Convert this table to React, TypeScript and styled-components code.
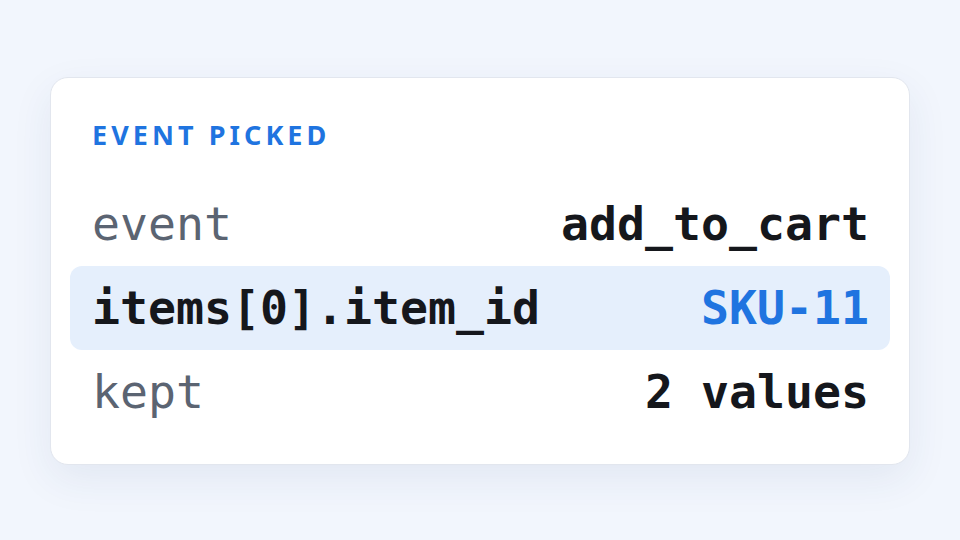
import React from "react";
import styled, { createGlobalStyle } from "styled-components";

const Global = createGlobalStyle`
  html, body { margin: 0; padding: 0; }
  body { background: #f2f6fd; width: 960px; height: 540px; overflow: hidden; }
`;

const Page = styled.div`
  width: 960px;
  height: 540px;
  display: flex;
  align-items: flex-start;
  justify-content: center;
  box-sizing: border-box;
  padding-top: 77px;
`;

const Card = styled.div`
  width: 860px;
  box-sizing: border-box;
  background: #ffffff;
  border: 1px solid #e2e6ee;
  border-radius: 18px;
  box-shadow: 0 14px 40px rgba(40, 60, 110, 0.08);
  padding: 39px 19px 30px;
  display: flex;
  flex-direction: column;
`;

const Heading = styled.div`
  font-family: "Noto Sans", "Open Sans", sans-serif;
  font-weight: 700;
  font-size: 27px;
  line-height: 36px;
  letter-spacing: 0.15em;
  color: #1f74e0;
  margin: 0 22px 29px;
`;

const Row = styled.div<{ $active?: boolean }>`
  height: 84px;
  display: flex;
  align-items: center;
  justify-content: space-between;
  padding: 0 21px 0 22px;
  border-radius: 12px;
  background: ${(p) => (p.$active ? "#e5effc" : "transparent")};
  font-family: "DejaVu Sans Mono", monospace;
  font-size: 46.5px;
  white-space: nowrap;
`;

const Key = styled.span<{ $strong?: boolean }>`
  font-weight: ${(p) => (p.$strong ? 700 : 400)};
  color: ${(p) => (p.$strong ? "#15171c" : "#5b6472")};
`;

const Value = styled.span<{ $accent?: boolean }>`
  font-weight: 700;
  color: ${(p) => (p.$accent ? "#1f74e0" : "#15171c")};
`;

const rows = [
  { k: "event", v: "add_to_cart" },
  { k: "items[0].item_id", v: "SKU-11", active: true },
  { k: "kept", v: "2 values" },
];

export default function App() {
  return (
    <>
      <Global />
      <Page>
        <Card>
          <Heading>EVENT PICKED</Heading>
          {rows.map((r) => (
            <Row key={r.k} $active={r.active}>
              <Key $strong={r.active}>{r.k}</Key>
              <Value $accent={r.active}>{r.v}</Value>
            </Row>
          ))}
        </Card>
      </Page>
    </>
  );
}
